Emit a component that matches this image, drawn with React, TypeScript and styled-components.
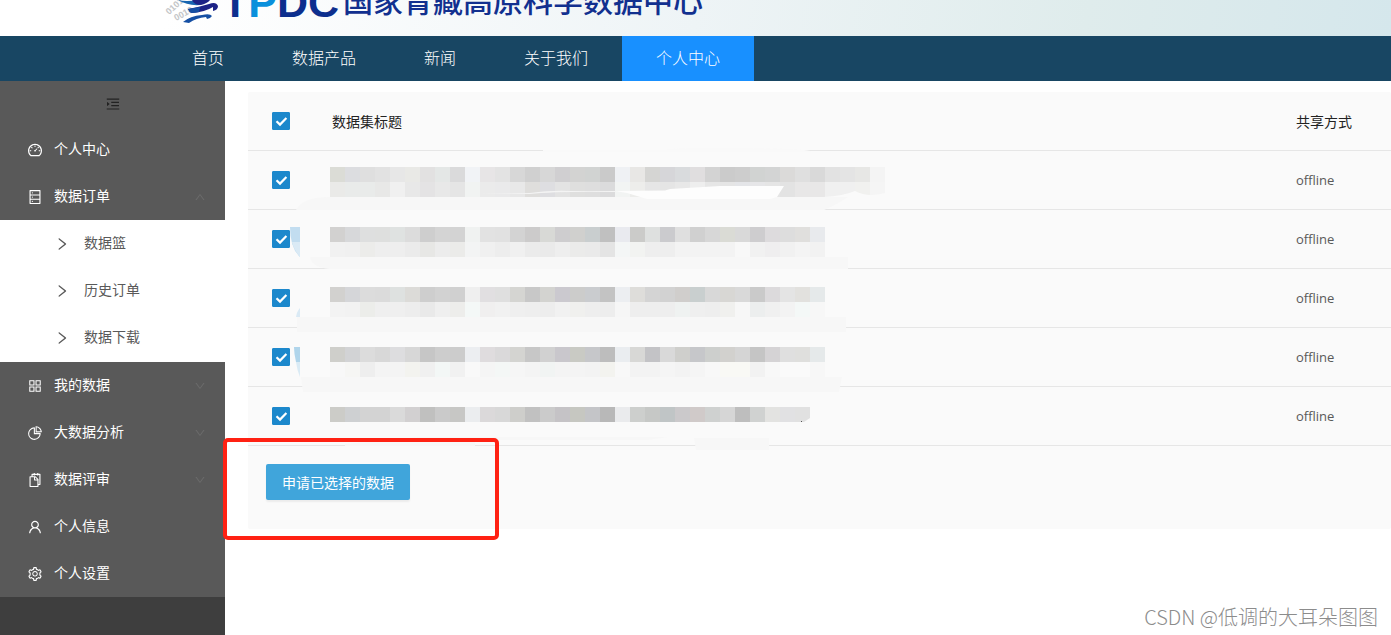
import React, { useState } from "react";
import styled, { createGlobalStyle } from "styled-components";
import {
  AiOutlineMenuUnfold,
  AiOutlineDashboard,
  AiOutlineDatabase,
  AiOutlineAppstore,
  AiOutlinePieChart,
  AiOutlineSnippets,
  AiOutlineUser,
  AiOutlineSetting,
  AiOutlineRight,
  AiOutlineUp,
  AiOutlineDown,
} from "react-icons/ai";

const GlobalStyle = createGlobalStyle`
  *, *::before, *::after { box-sizing: border-box; }
  body {
    margin: 0;
    background: #fff;
    color: #595959;
    font-family: "Open Sans", "Noto Sans CJK SC", sans-serif;
    font-size: 14px;
  }
`;

const Page = styled.div`
  display: flex;
  flex-direction: column;
  min-height: 100vh;
`;

const Banner = styled.header`
  display: flex;
  align-items: flex-end;
  height: 36px;
  padding-left: 160px;
  overflow: hidden;
  background: linear-gradient(100deg, #ffffff 12%, #eef4f6 50%, #dfecec 78%, #d5e7ec 100%);
`;

const Globe = styled.svg`
  flex: none;
  width: 62px;
  height: 60px;
`;

const Acronym = styled.span`
  flex: none;
  width: 121px;
  color: #0d2f8e;
  font: bold 43px/50px "Liberation Sans", sans-serif;
  padding-bottom: 9px;

  em {
    color: #0a90dc;
    font-style: normal;
  }
`;

const SiteName = styled.span`
  flex: none;
  color: #12308f;
  font: 500 30px/40px "Noto Sans CJK SC", sans-serif;
  padding-bottom: 17px;
`;

const NavBar = styled.nav`
  display: flex;
  height: 45px;
  padding-left: 158px;
  background: #184663;
`;

const NavLink = styled.a<{ $active?: boolean }>`
  display: flex;
  align-items: center;
  padding: 0 34px 3px;
  background: ${(p) => (p.$active ? "#1890ff" : "transparent")};
  color: #fff;
  font-size: 16px;
  font-weight: 300;
  text-decoration: none;
`;

const Body = styled.div`
  display: flex;
  flex: 1;
`;

const Sidebar = styled.aside`
  flex: none;
  width: 225px;
  background: #3e3e3e;
`;

const Menu = styled.div`
  background: #595959;
`;

const CollapseButton = styled.button`
  display: flex;
  align-items: center;
  justify-content: center;
  width: 100%;
  height: 45px;
  padding: 0;
  border: 0;
  background: none;
  color: #222;
  font-size: 16px;
`;

const ItemText = styled.span`
  flex: 1;
  padding-bottom: 3px;
`;

const MenuItem = styled.a`
  display: flex;
  align-items: center;
  gap: 11px;
  height: 47px;
  padding: 0 19px 0 27px;
  color: #fff;
  text-decoration: none;

  > svg {
    flex: none;
    font-size: 16px;
  }
`;

const Caret = styled.i`
  display: flex;
  color: #6b6b6b;
  font-size: 12px;
`;

const SubMenu = styled.div`
  padding-bottom: 1px;
  background: #fff;
`;

const SubItem = styled.a`
  display: flex;
  align-items: center;
  gap: 14px;
  height: 47px;
  padding-left: 54px;
  color: #595959;
  text-decoration: none;

  > svg {
    flex: none;
    font-size: 16px;
  }
`;

const Main = styled.main`
  flex: 1;
  min-width: 0;
  padding: 11px 0 0 23px;
`;

const Panel = styled.section`
  position: relative;
  border-radius: 2px;
  background: #fafafa;
`;

const OrderTable = styled.table`
  width: 100%;
  table-layout: fixed;
  border-collapse: separate;
  border-spacing: 0;
`;

const Cell = styled.td`
  height: 59px;
  padding: 0;
  border-bottom: 1px solid #e6e6e6;
  font-size: 13px;
`;

const HeadCell = styled.th<{ $width?: number }>`
  width: ${(p) => (p.$width ? `${p.$width}px` : "auto")};
  height: 59px;
  padding: 0;
  border-bottom: 1px solid #e6e6e6;
  color: #222;
  font-size: 14px;
  font-weight: 400;
  text-align: left;
`;

const CheckLabel = styled.label`
  display: grid;
  width: 18px;
  height: 18px;
  margin-left: 24px;

  > * { grid-area: 1 / 1; }
  svg { pointer-events: none; }
`;

const CheckInput = styled.input`
  appearance: none;
  width: 18px;
  height: 18px;
  margin: 0;
  border: 1px solid #1c88cc;
  border-radius: 1px;
  background: #fff;

  &:checked { background: #1c88cc; }
  &:not(:checked) + svg { visibility: hidden; }
`;

const Mosaic = styled.svg`
  position: absolute;
  top: 56px;
  left: 0;
  width: 660px;
  height: 304px;
  pointer-events: none;
`;

const PanelFooter = styled.div`
  position: relative;
  height: 83px;
  padding: 18px;
`;

const ApplyButton = styled.button`
  height: 36px;
  padding: 0 16px;
  border: 0;
  border-radius: 2px;
  background: #40a5db;
  box-shadow: 0 2px 2px rgba(0, 0, 0, 0.06);
  color: #fff;
  font-family: inherit;
  font-size: 14px;
`;

const RedFrame = styled.div`
  position: absolute;
  top: -8px;
  left: -25px;
  width: 276px;
  height: 102px;
  border: 4px solid #ff2113;
  border-radius: 5px;
  pointer-events: none;
`;

const Watermark = styled.div`
  position: absolute;
  right: 13px;
  bottom: 4px;
  color: #8c8c8c;
  font: 300 20px/28px "Noto Sans CJK SC", sans-serif;
`;

const nav = ["首页", "数据产品", "新闻", "关于我们", "个人中心"];

const baseMenu = [
  { label: "我的数据", icon: <AiOutlineAppstore />, group: true },
  { label: "大数据分析", icon: <AiOutlinePieChart />, group: true },
  { label: "数据评审", icon: <AiOutlineSnippets />, group: true },
  { label: "个人信息", icon: <AiOutlineUser />, group: false },
  { label: "个人设置", icon: <AiOutlineSetting />, group: false },
];

const TILE = 15;
const tiles: { y: number; colors: string }[] = [
  { y: 19, colors: "dbdcd6 dcdde0 dfdfdf e2e2e2 e7e7e7 e9e9e6 e2e1e1 e4e7e6 dadadb f1f3f6 e7e5e6 e3e3e3 d7d7d7 d0d0d0 d7d7d7 d0cfd1 d3d3d2 d1d3d2 cacaca eff1f4 e8e7e5 d5d5d3 d6d6d9 d9dbdd e0dedf d3d3d3 cbcbcb cdcdcd d1d3d2 d3d4d4 dbdad9 dfdfdf d9d9d9 e2e2e2 e4e4e4 e7e7e5 f4f4f4" },
  { y: 34, colors: "eaeae8 e9ebea e9ebea e8e8e7 f0f0f0 e8e8e8 e4e3e4 e8e8e8 e5e5e5 f1f3f2 ebebeb eaeaeb e8e8e8 dfdedc dedee1 e3e3e3 dfdfde dedede dbdbdc f2f4f3 ededeb e6e6e6 e5e5e5 e8e8e8 eeeeee e6e6e6 e5e5e5 e4e5e8 e6e6e8 e5e5e5 e3e3e3 e8e7e7 e8e7e7 f0f0f0 f0f0f0 f1f1ef f5f5f5" },
  { y: 79, colors: "d2d1d0 d7d8da dedfdf dedfde dfe2e1 dcdcdc cecece d4d4d4 d3d3d3 f0f2f1 e2e2e2 e1e1e1 d3d3d3 cccbcb d8d9d6 cecdcf d0d0ce c9cecf c0c0c0 e9eaef cbcbc9 dee0df cbcbce dfdfdf d0d0d0 d7d7d7 dadbd5 d9d9d9 cecdcf dddbdd dddddd e0dfdd e8eaed" },
  { y: 94, colors: "f1f1f1 f0f0f0 ececea eeeeee eeeeee ebebeb e7e7e5 ececec ebebe9 f3f4f4 f0f0f0 ededed f0f0f0 ebebeb eaeaea eeeeee ebebea eaeaea e4e4e4 f4f6f6 f2f3f1 eeeeee eeeeee f3f3f3 f3f3f3 f3f3f3 f3f3f3 f8f8f8 f1f1f1 efeeef f1f1f1 f4f4f4 f2f2f2" },
  { y: 139, colors: "d2d1cf d5d6d9 dcdcdc dbdbdb dee1e0 dcdbd8 cecece d2d2d2 d0d0d0 efefef e1dfe1 dfdfdf d5d5d2 c8c8c8 d3d3d0 cbc9cf cccccb cacccf c3c3c3 eceef1 deddda d4d4d4 d2d2d2 d0cecc c9cfcf d8d8d8 d8d7d4 d9d9d9 cacaca dcdadc e4e4e4 e2e1de e5e9ea" },
  { y: 154, colors: "f3f3f3 f2f2f2 ecedea efefef efefef ededed e9e9e9 efefef ededeb f4f8f7 f0efef f1f1f1 efefef eeeeee ededed f1f1f1 f0f0ee eeeeee ededed f6f6f6 eeeeee eeeeee eeeeee eff2f1 efefef eeeeee f0f0ee f7f7f7 eceeee f0f0f0 f3f3f3 f4f8f7 f7f7f7" },
  { y: 199, colors: "cfcfcb d2d3d5 dcdcdc d8d8d8 dddddf d7d7d7 c6c6c6 cdcdcd cccccc eceef1 dfdcde dad9da d4d4d1 c7c7c7 d1d1d1 c9c7cc c9cac4 c6c7ca bdbdbd eaedf0 d8d8d6 c3c3c6 d9d9d9 cfcfcc c6c7ca cdcfcd d2d1ce d5d5d5 c5c5c5 d5d3d5 dfdfdf dfdfdd e5e9ea" },
  { y: 214, colors: "f8f8f8 f6f6f4 eeeeee f4f4f4 f4f4f4 f3f3ef f0f0f0 f3f7f6 f1f1f1 f9f9f9 f5f5f5 f4f7f6 f6f6f6 f4f4f4 f1f4f3 f4f4f4 f4f4f4 f3f3f3 f3f3ef f8f8f8 f3f3f3 f3f3f3 f5f5f5 f3f3f3 f5f5f5 f8f8f8 f9f9f5 f9f9f5 f2f2f2 f8f8f8 fafafa fafafa f7f7f7" },
  { y: 259, colors: "ccccc8 ced0d2 d3d3d3 d3d3d3 dadada d2d0d1 c0c0bf cacaca c7c7c5 ebedef dbd9da d8d8d8 cececb c1c1c1 cbcbcb c5c3c6 c6c7c1 c4c5c8 b8b8b8 eaebed cdcfcd c6c8c6 c0c5c6 cbc9cb d0cac9 cfd1d0 d6d6d6 bebebe d0d2d1 e3e3e1 e1e1e3 e1e1e1" },
];

function SelectBox({ id, label }: { id: string; label: string }) {
  const [checked, setChecked] = useState(true);
  return (
    <CheckLabel htmlFor={id}>
      <CheckInput
        id={id}
        type="checkbox"
        aria-label={label}
        checked={checked}
        onChange={(e) => setChecked(e.target.checked)}
      />
      <svg width="18" height="18" viewBox="0 0 18 18" aria-hidden="true">
        <path d="M4.5 9.2 8 12.6 14.4 6" fill="none" stroke="#fff" strokeWidth="2.2" />
      </svg>
    </CheckLabel>
  );
}

function TitleMosaic() {
  return (
    <Mosaic viewBox="0 0 660 304" aria-hidden="true">
      {/* brushed patches that cover parts of the row borders */}
      <g fill="#f7f7f7">
        <path d="M295 2H415Q430 -1 500 0T562 4H295Z" fill="#f9f9f9" />
        <path d="M48 62Q54 49 82 49H600Q590 56 576 62Z" />
        <path d="M62 109H600V121H90Q64 122 62 109Z" />
        <path d="M49 169H598V184H49Z" />
        <path d="M53 229H594L591 244H55Z" />
        <path d="M97 298V296L170 289H420L400 292H227V298Z" />
        <path d="M446 290H521V302H448Z" />
      </g>
      {tiles.map((row) =>
        row.colors.split(" ").map((c, i) => (
          <rect key={`${row.y}-${i}`} x={82 + i * TILE} y={row.y} width={TILE} height={TILE} fill={`#${c}`} />
        )),
      )}
      <path d="M232 46 282 45Q305 42 322 43H367V44Q310 43 282 46Z" fill="#f4f4f4" />
      <path d="M367 43 417 42.600 422 41 472 38 536 38 529 49 522 51H399L379 45Z" fill="#fdfdfd" />
      <path d="M576 49Q595 48 607 43Q620 50 637 45V49Z" fill="#fafafa" />
      <path d="M42 79H52V109Q42 100 42 79Z" fill="#c2ddf0" />
      <path d="M44 94H52V109Q46 102 44 94Z" fill="#daeaf5" />
      <path d="M52 160V169H48Q49 163 52 160Z" fill="#daeaf5" />
      <path d="M46 199H52V214H48Q46 206 46 199Z" fill="#b0d5eb" />
      <path d="M48 214H52V229Q49 222 48 214Z" fill="#daebf5" />
      <path d="M562 270 556 274H562Z" fill="#fafafa" />
      <rect x="553" y="273" width="1" height="1" fill="#555" />
    </Mosaic>
  );
}

function LogoGlobe() {
  return (
    <Globe viewBox="0 0 62 60" aria-hidden="true">
      <g fontFamily="Liberation Sans" fontSize="9" fontWeight="bold" fill="#c4c6c8">
        <text transform="translate(9 39) rotate(-42)">0101</text>
        <text transform="translate(16 45) rotate(-28)">0010</text>
      </g>
      <path d="M18 24Q26 26 38 24L40 29Q28 30 18 24Z" fill="#1765b0" />
      <path d="M32 24H50Q48 27 41 29Q34 29 32 24Z" fill="#1d2386" />
      <path d="M28 33Q39 31 49 28Q56 25 58 30Q58 34 53 35L53 31Q45 36 32 37Q29 36 28 33Z" fill="#1d2386" />
      <path d="M28 33Q34 32 40 31L39 36Q35 37 32 37Q29 36 28 33Z" fill="#154fa3" />
      <path d="M23 46Q30 40 42 39Q50 37 52 40Q50 43 47 43L46 41Q36 42 29 47Z" fill="#154fa3" />
    </Globe>
  );
}

export default function App() {
  return (
    <>
      <GlobalStyle />
      <Page>
        <Banner>
          <LogoGlobe />
          <Acronym>
            T<em>P</em>DC
          </Acronym>
          <SiteName>国家青藏高原科学数据中心</SiteName>
        </Banner>
        <NavBar>
          {nav.map((label) => (
            <NavLink key={label} href="#" $active={label === "个人中心"}>
              {label}
            </NavLink>
          ))}
        </NavBar>
        <Body>
          <Sidebar>
            <Menu>
              <CollapseButton type="button" aria-label="收起菜单">
                <AiOutlineMenuUnfold />
              </CollapseButton>
              <MenuItem href="#">
                <AiOutlineDashboard />
                <ItemText>个人中心</ItemText>
              </MenuItem>
              <MenuItem href="#">
                <AiOutlineDatabase />
                <ItemText>数据订单</ItemText>
                <Caret><AiOutlineUp /></Caret>
              </MenuItem>
              <SubMenu>
                {["数据篮", "历史订单", "数据下载"].map((label) => (
                  <SubItem key={label} href="#">
                    <AiOutlineRight />
                    <ItemText>{label}</ItemText>
                  </SubItem>
                ))}
              </SubMenu>
              {baseMenu.map((item) => (
                <MenuItem key={item.label} href="#">
                  {item.icon}
                  <ItemText>{item.label}</ItemText>
                  {item.group && <Caret><AiOutlineDown /></Caret>}
                </MenuItem>
              ))}
            </Menu>
          </Sidebar>
          <Main>
            <Panel>
              <OrderTable>
                <thead>
                  <tr>
                    <HeadCell $width={84}>
                      <SelectBox id="all" label="全选" />
                    </HeadCell>
                    <HeadCell>数据集标题</HeadCell>
                    <HeadCell $width={95}>共享方式</HeadCell>
                  </tr>
                </thead>
                <tbody>
                  {[1, 2, 3, 4, 5].map((n) => (
                    <tr key={n}>
                      <Cell>
                        <SelectBox id={`order-${n}`} label={`选择第${n}行`} />
                      </Cell>
                      <Cell />
                      <Cell>offline</Cell>
                    </tr>
                  ))}
                </tbody>
              </OrderTable>
              <TitleMosaic />
              <PanelFooter>
                <ApplyButton type="button">申请已选择的数据</ApplyButton>
                <RedFrame />
              </PanelFooter>
            </Panel>
          </Main>
        </Body>
      </Page>
      <Watermark>CSDN @低调的大耳朵图图</Watermark>
    </>
  );
}
